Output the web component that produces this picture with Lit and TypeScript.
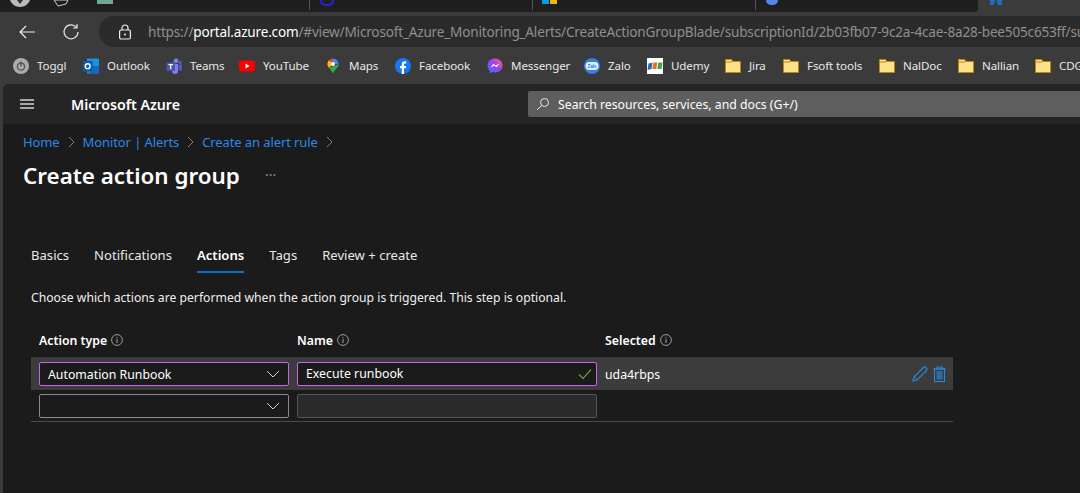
import { LitElement, css, html, svg } from "lit";
import { customElement } from "lit/decorators.js";

const info = html`<svg class="info" viewBox="0 0 12 12" width="12" height="12">
  <circle cx="6" cy="6" r="5.4" fill="none" stroke="#9a9a9a" stroke-width="1"></circle>
  <path d="M6 5.2v3.6M6 3.2v1" stroke="#b0b0b0" stroke-width="1" fill="none"></path>
</svg>`;

const chevron = html`<svg class="chev" viewBox="0 0 14 8" width="14" height="8">
  <path d="M1 1l6 6 6-6" fill="none" stroke="#d0d0d0" stroke-width="1"></path>
</svg>`;

const crumbSep = html`<svg viewBox="0 0 7 12" width="7" height="12">
  <path d="M1 1l5 5-5 5" fill="none" stroke="#7d7d7d" stroke-width="1"></path>
</svg>`;

const folder = svg`<path d="M.5 1.500h6l1.500 2h7.500v11H.5z" fill="#fde08a" stroke="#b8890f" stroke-width="1"></path>
  <path d="M.5 4h5.500l2-1" fill="none" stroke="#b8890f" stroke-width="1"></path>`;

const icons: Record<string, unknown> = {
  toggl: svg`<circle cx="8" cy="8" r="8" fill="#ababab"></circle>
    <circle cx="8" cy="8.600" r="3.600" fill="none" stroke="#555" stroke-width="1.300"></circle>
    <path d="M8 3.600v5" stroke="#555" stroke-width="1.300"></path>`,
  outlook: svg`<rect x="4" y="0.500" width="12" height="15" fill="#1e8fe0"></rect>
    <path d="M9 8h7v7.500H6z" fill="#0f6cbd"></path>
    <rect x="0" y="3" width="9.500" height="10.500" fill="#0a5ca8"></rect>
    <circle cx="4.700" cy="8.200" r="2.400" fill="none" stroke="#fff" stroke-width="1.400"></circle>`,
  teams: svg`<circle cx="10" cy="2.800" r="2.400" fill="#7b83eb"></circle>
    <circle cx="14" cy="4.400" r="1.700" fill="#5059c9"></circle>
    <path d="M6 6h6v7a3 3 0 0 1-6 0z" fill="#7b83eb"></path>
    <path d="M12.500 6.500H16v4.500a2 2 0 0 1-3.500 1z" fill="#5059c9"></path>
    <rect x="0.500" y="4.500" width="8.500" height="8.500" fill="#4b53bc"></rect>
    <path d="M2.500 6.600h4.500M4.700 6.600v4.600" stroke="#fff" stroke-width="1.200"></path>`,
  youtube: svg`<rect x="0" y="2.500" width="16" height="11" rx="3" fill="#f00"></rect>
    <path d="M6.500 5.500l4 2.500-4 2.500z" fill="#fff"></path>`,
  maps: svg`<path d="M13.600 6.100c0 1.600-.7 2.800-1.600 4-1.400 1.800-3 3.300-4 5.400-1-2.100-2.600-3.600-4-5.400z" fill="#34a853"></path>
    <path d="M8 .5a5.600 5.600 0 0 1 5.600 5.600L8 6.100z" fill="#4285f4"></path>
    <path d="M8 .5A5.600 5.600 0 0 0 4 2.200L8 6.100z" fill="#ea4335"></path>
    <path d="M2.400 6.100A5.600 5.600 0 0 1 4 2.200L8 6.100 4 10.100c-.9-1.200-1.600-2.400-1.600-4z" fill="#fbbc04"></path>
    <circle cx="8" cy="6" r="2" fill="#fff"></circle>`,
  facebook: svg`<circle cx="8" cy="8" r="8" fill="#1877f2"></circle>
    <path d="M6.800 16V10.300H5V8h1.800V6.300C6.800 4.400 8 3.300 9.700 3.300c.8 0 1.500.1 1.500.1v2h-1c-1 0-1.200.6-1.200 1.200V8h2.100l-.3 2.300H9V16z" fill="#fff"></path>`,
  messenger: html`<svg viewBox="0 0 16 16" width="16" height="16">
    <defs><linearGradient id="m" x1="0" y1="1" x2="1" y2="0"><stop offset="0" stop-color="#2f7bf5"></stop><stop offset=".55" stop-color="#a33ff0"></stop><stop offset="1" stop-color="#ff6a68"></stop></linearGradient></defs>
    <path d="M8 .5C3.700.5.500 3.600.500 7.600c0 2.100.9 3.900 2.300 5.200v2.700l2.500-1.400c.8.200 1.700.3 2.700.3 4.300 0 7.500-3.100 7.500-7S12.300.5 8 .5z" fill="url(#m)"></path>
    <path d="M3.500 9.800l2.800-4 2.200 1.800 3.900-2.200-2.800 4-2.200-1.800z" fill="#fff"></path></svg>`,
  zalo: svg`<circle cx="8" cy="8" r="8" fill="#2f80ed"></circle>
    <rect x="1.500" y="4" width="13" height="8" rx="4" fill="#e8f1ff"></rect>
    <text x="8" y="9.800" text-anchor="middle" font-size="4.600" font-weight="700" fill="#2f6fdc" font-family="Liberation Sans, sans-serif">Zalo</text>`,
  fpt: svg`<rect width="16" height="16" fill="#fff"></rect>
    <path d="M1.500 5.500l4-1-1 6.500-4 1z" fill="#1f6db5"></path>
    <path d="M6.300 4.500h4l-1 6.500h-4z" fill="#f26f21"></path>
    <path d="M11.300 4.500h4.200l-1 6.500h-4.200z" fill="#39a84a"></path>`,
};

// label widths keep the row on the same slots as the narrower system font
const bookmarks = [
  { icon: "toggl", label: "Toggl", w: 29 },
  { icon: "outlook", label: "Outlook", w: 42 },
  { icon: "teams", label: "Teams", w: 32 },
  { icon: "youtube", label: "YouTube", w: 45 },
  { icon: "maps", label: "Maps", w: 29 },
  { icon: "facebook", label: "Facebook", w: 51 },
  { icon: "messenger", label: "Messenger", w: 56 },
  { icon: "zalo", label: "Zalo", w: 22 },
  { icon: "fpt", label: "Udemy", w: 37 },
  { icon: "folder", label: "Jira", w: 17 },
  { icon: "folder", label: "Fsoft tools", w: 55 },
  { icon: "folder", label: "NalDoc", w: 38 },
  { icon: "folder", label: "Nallian", w: 36 },
  { icon: "folder", label: "CDG", w: 30 },
];

@customElement("app-root")
export class AppRoot extends LitElement {
  static styles = css`
    :host {
      display: block;
      width: 1080px;
      height: 493px;
      overflow: hidden;
      background: #3b3b3b;
      font-family: "Noto Sans", "Open Sans", sans-serif;
      color: #fff;
    }

    * {
      box-sizing: border-box;
    }

    svg {
      display: block;
      flex: none;
    }

    .tabstrip {
      display: flex;
      height: 12px;
      overflow: hidden;
      background: #3b3b3b;
    }

    .tabs {
      width: 978px;
      height: 12px;
      background: #1f1f1f;
      border-bottom-right-radius: 4px;
      overflow: hidden;
      flex: none;
    }

    .tab-next {
      margin-left: 12px;
    }

    .toolbar {
      display: flex;
      align-items: center;
      height: 35px;
      padding: 4px 0 0 18px;
    }

    .toolbar .back {
      margin-right: 26px;
    }

    .toolbar .reload {
      margin-right: 19px;
    }

    .urlbar {
      flex: 1;
      height: 31px;
      min-width: 0;
      display: flex;
      align-items: center;
      overflow: hidden;
      background: #2b2b2b;
      border-radius: 15px 0 0 15px;
      padding-left: 19px;
      font-size: 13.600px;
      letter-spacing: -0.2px;
      white-space: nowrap;
      color: #8f8f8f;
    }

    .urlbar .lock {
      margin-right: 16px;
    }

    .urlbar b {
      font-weight: 400;
      color: #fff;
    }

    .bookmarks {
      display: flex;
      align-items: center;
      height: 37px;
      padding-left: 13px;
      gap: 17px;
      white-space: nowrap;
      overflow: hidden;
      font-size: 11.600px;
      letter-spacing: -0.12px;
      color: #e8e8e8;
    }

    .bm {
      display: flex;
      align-items: center;
      gap: 8px;
      flex: none;
    }

    .portal {
      margin-left: 3px;
      height: 409px;
      background: #1b1b1b;
      border-top-left-radius: 6px;
      overflow: hidden;
    }

    .topbar {
      display: flex;
      align-items: center;
      height: 40px;
      background: #252525;
      padding-left: 17px;
    }

    .burger {
      width: 14px;
      height: 10px;
      border-top: 2px solid #a8a8a8;
      border-bottom: 2px solid #a8a8a8;
      margin-right: 37px;
    }

    .burger::after {
      content: "";
      display: block;
      height: 2px;
      margin-top: 2px;
      background: #a8a8a8;
    }

    .brand {
      font-size: 14.200px;
      font-weight: 600;
      width: 457px;
      flex: none;
    }

    .search {
      flex: 1;
      height: 26px;
      display: flex;
      align-items: center;
      gap: 8px;
      padding-left: 8px;
      background: #5e5e5e;
      border-radius: 2px 0 0 2px;
      font-size: 12.250px;
    }

    .content {
      padding: 9px 0 0 20px;
    }

    .crumbs {
      display: flex;
      align-items: center;
      height: 18px;
      font-size: 13px;
      letter-spacing: -0.1px;
      color: #2a88ea;
      gap: 8px;
      margin-bottom: 6px;
    }

    .title-row {
      display: flex;
      align-items: center;
      height: 36px;
    }

    h1 {
      margin: 0;
      font-size: 22.400px;
      font-weight: 600;
      width: 242px;
    }

    .dots {
      color: #8f8f8f;
      font-size: 14px;
      line-height: 1;
    }

    .tabs-nav {
      display: flex;
      gap: 25px;
      margin: 48px 0 0 8px;
      height: 32px;
      font-size: 13.100px;
      color: #e8e8e8;
    }

    .tabs-nav span {
      height: 32px;
      line-height: 28px;
    }

    .tabs-nav .on {
      font-weight: 600;
      color: #fff;
      border-bottom: 2px solid #0f6fcb;
    }

    .intro {
      margin: 16px 0 0 8px;
      height: 18px;
      font-size: 12.200px;
      color: #efefef;
    }

    .table {
      width: 922px;
      margin: 21px 0 0 8px;
    }

    .row {
      display: grid;
      grid-template-columns: 250px 300px 1fr;
      column-gap: 8px;
      padding-left: 8px;
      align-items: center;
    }

    .head {
      height: 29px;
      padding-bottom: 5px;
      font-size: 12.300px;
      font-weight: 600;
    }

    .head div {
      display: flex;
      align-items: center;
      gap: 4px;
    }

    .r1 {
      height: 33px;
      background: #3c3c3c;
      font-size: 12.300px;
    }

    .r1 .nudge {
      padding-top: 1px;
    }

    .r2 {
      height: 32px;
      padding-top: 1px;
      border-bottom: 1px solid #4a4a4a;
    }

    .field {
      height: 24px;
      width: 100%;
      display: flex;
      align-items: center;
      justify-content: space-between;
      padding: 0 8px;
      border: 1px solid #8a8a8a;
      border-radius: 2px;
      background: #1b1b1b;
    }

    .r1 .field {
      border-color: #cb62ea;
    }

    .field.disabled {
      border-color: #555;
      background: #2a2a2a;
    }

    .field.name {
      padding-right: 4px;
    }

    .selected {
      display: flex;
      align-items: center;
      justify-content: space-between;
      padding-right: 7px;
    }

    .actions {
      display: flex;
      align-items: center;
      gap: 5px;
    }
  `;

  render() {
    return html`
      <div class="tabstrip">
        <div class="tabs">
          <svg viewBox="0 0 978 12" width="978" height="12">
            <path d="M10 0h20c-1 2.500-4 7-10 7S11 2.500 10 0z" fill="#bdbdbd"></path>
            <path d="M17 0l3 4 3-4z" fill="#333"></path>
            <path d="M54 0h14l-2 4-8 2z" fill="none" stroke="#c8c8c8" stroke-width="1"></path>
            <rect x="97" y="0" width="16" height="4" fill="#6fa98f"></rect>
            <path d="M309.500 0v10M532.500 0v10M755.500 0v10" stroke="#555" stroke-width="1"></path>
            <path d="M321 0c0 4 3 5 6 5s6-1 6-5" fill="none" stroke="#2222dd" stroke-width="2"></path>
            <rect x="542" y="0" width="7" height="4" fill="#0a9bea"></rect>
            <rect x="550" y="0" width="7" height="4" fill="#f5b400"></rect>
            <path d="M766 0c0 4 3 5 6 5s6-1 6-5z" fill="#4f86e8"></path>
          </svg>
        </div>
        <svg class="tab-next" viewBox="0 0 12 5" width="12" height="5">
          <path d="M0 0h5v2l-2 3H0zM7 0h5v5H8l-1-2z" fill="#1a6fc4"></path>
        </svg>
      </div>
      <div class="toolbar">
        <svg class="back" viewBox="0 0 18 16" width="18" height="16">
          <path d="M17 8H2M8 2L2 8l6 6" fill="none" stroke="#f0f0f0" stroke-width="1.200"></path>
        </svg>
        <svg class="reload" viewBox="0 0 18 18" width="18" height="18">
          <path d="M14.500 4.500A7 7 0 1 0 16 9M15 1v4h-4" fill="none" stroke="#e8e8e8" stroke-width="1.200"></path>
        </svg>
        <div class="urlbar">
          <svg class="lock" viewBox="0 0 14 16" width="14" height="16">
            <path d="M4 6V4a3 3 0 0 1 6 0v2" fill="none" stroke="#eee" stroke-width="1.200"></path>
            <rect x="1.600" y="6" width="10.800" height="9" rx="1.500" fill="none" stroke="#eee" stroke-width="1.200"></rect>
            <circle cx="7" cy="10.500" r="1" fill="#eee"></circle>
          </svg>
          <span>https://<b>portal.azure.com</b>/#view/Microsoft_Azure_Monitoring_Alerts/CreateActionGroupBlade/subscriptionId/2b03fb07-9c2a-4cae-8a28-bee505c653ff/subscriptions</span>
        </div>
      </div>
      <div class="bookmarks">
        ${bookmarks.map(
          (b) => html`<div class="bm">
            ${b.icon === "messenger"
              ? icons.messenger
              : html`<svg viewBox="0 0 16 16" width="16" height="16">
                  ${b.icon === "folder" ? folder : icons[b.icon]}
                </svg>`}
            <span style="width:${b.w}px">${b.label}</span>
          </div>`
        )}
      </div>
      <div class="portal">
        <div class="topbar">
          <div class="burger"></div>
          <div class="brand">Microsoft Azure</div>
          <div class="search">
            <svg viewBox="0 0 14 14" width="14" height="14">
              <circle cx="8.500" cy="5.500" r="4" fill="none" stroke="#e8e8e8" stroke-width="1"></circle>
              <path d="M5.500 8.500L1 13" stroke="#e8e8e8" stroke-width="1"></path>
            </svg>
            <span>Search resources, services, and docs (G+/)</span>
          </div>
        </div>
        <div class="content">
          <div class="crumbs">
            <span>Home</span>${crumbSep}
            <span>Monitor | Alerts</span>${crumbSep}
            <span>Create an alert rule</span>${crumbSep}
          </div>
          <div class="title-row">
            <h1>Create action group</h1>
            <span class="dots">···</span>
          </div>
          <div class="tabs-nav">
            <span>Basics</span>
            <span>Notifications</span>
            <span class="on">Actions</span>
            <span>Tags</span>
            <span>Review + create</span>
          </div>
          <div class="intro">Choose which actions are performed when the action group is triggered. This step is optional.</div>
          <div class="table">
            <div class="row head">
              <div>Action type ${info}</div>
              <div>Name ${info}</div>
              <div>Selected ${info}</div>
            </div>
            <div class="row r1">
              <div class="field"><span class="nudge">Automation Runbook</span>${chevron}</div>
              <div class="field name">
                <span>Execute runbook</span>
                <svg viewBox="0 0 14 12" width="14" height="12">
                  <path d="M1 6.500l4 4 8-9" fill="none" stroke="#6f9a3c" stroke-width="1.200"></path>
                </svg>
              </div>
              <div class="selected">
                <span class="nudge">uda4rbps</span>
                <div class="actions">
                  <svg viewBox="0 0 16 16" width="16" height="16">
                    <path d="M1 15l1.200-4.200L11.500 1.500a1.500 1.500 0 0 1 2.100 0l.9.900a1.500 1.500 0 0 1 0 2.100L5.200 13.800z" fill="none" stroke="#2b88d8" stroke-width="1.200"></path>
                    <path d="M2.200 10.800l3 3" stroke="#2b88d8" stroke-width="1"></path>
                  </svg>
                  <svg viewBox="0 0 13 16" width="13" height="16">
                    <path d="M0 3h13M4 3V1h5v2" fill="none" stroke="#2b88d8" stroke-width="1.100"></path>
                    <rect x="1.500" y="3" width="10" height="12.500" fill="none" stroke="#2b88d8" stroke-width="1"></rect>
                    <rect x="3.500" y="5" width="6" height="8.500" fill="#2a6ca6"></rect>
                  </svg>
                </div>
              </div>
            </div>
            <div class="row r2">
              <div class="field"><span></span>${chevron}</div>
              <div class="field disabled"></div>
              <div></div>
            </div>
          </div>
        </div>
      </div>
    `;
  }
}
